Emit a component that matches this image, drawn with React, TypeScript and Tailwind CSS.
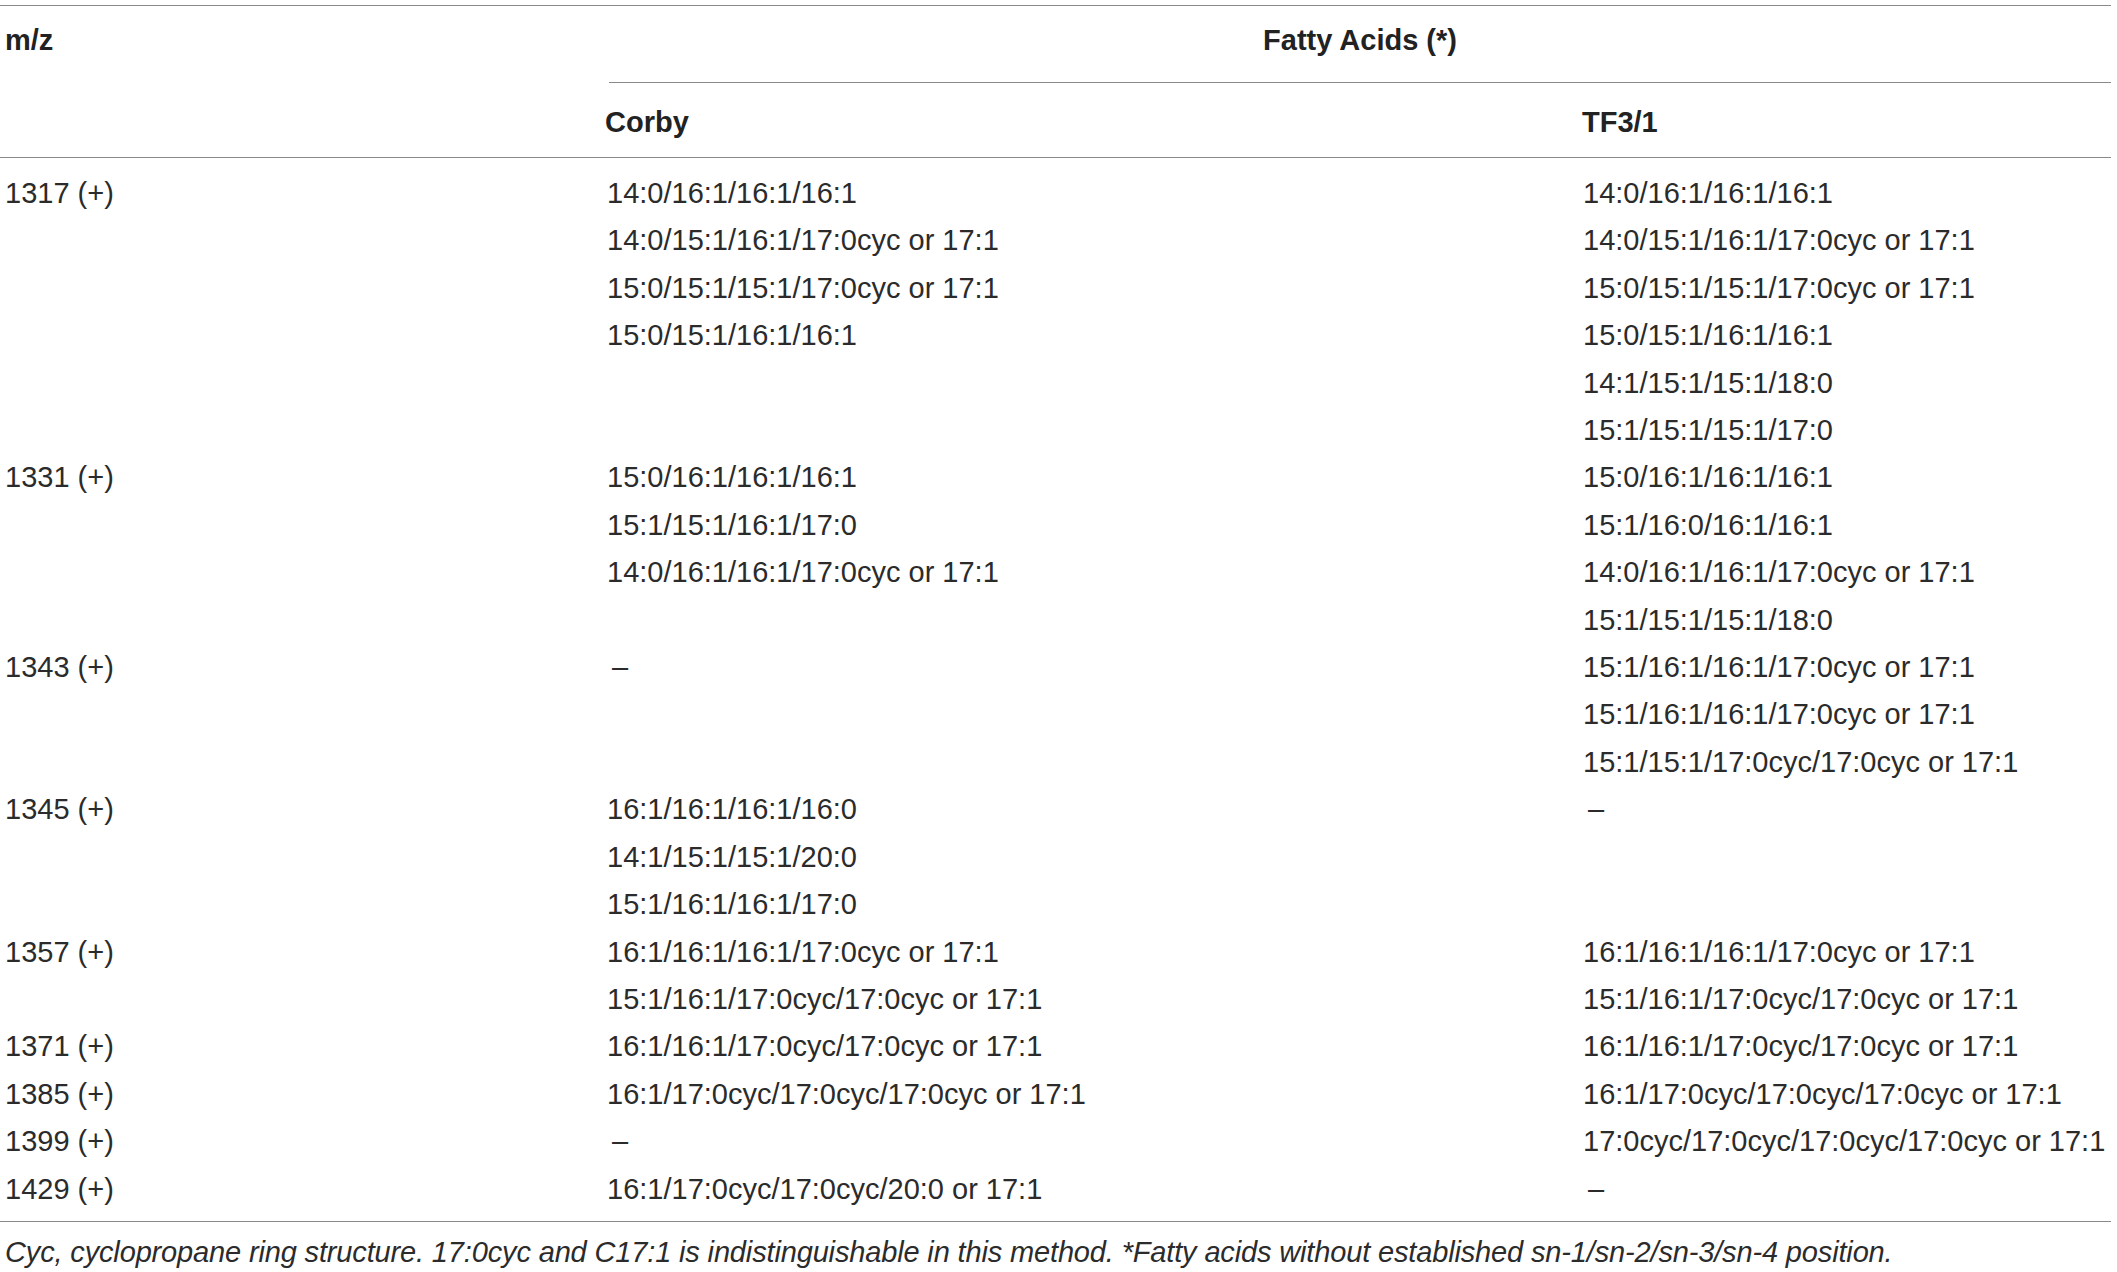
import React from "react";

type Group = { mz: string; corby: string[]; tf: string[] };

const groups: Group[] = [
  {
    mz: "1317 (+)",
    corby: [
      "14:0/16:1/16:1/16:1",
      "14:0/15:1/16:1/17:0cyc or 17:1",
      "15:0/15:1/15:1/17:0cyc or 17:1",
      "15:0/15:1/16:1/16:1",
    ],
    tf: [
      "14:0/16:1/16:1/16:1",
      "14:0/15:1/16:1/17:0cyc or 17:1",
      "15:0/15:1/15:1/17:0cyc or 17:1",
      "15:0/15:1/16:1/16:1",
      "14:1/15:1/15:1/18:0",
      "15:1/15:1/15:1/17:0",
    ],
  },
  {
    mz: "1331 (+)",
    corby: ["15:0/16:1/16:1/16:1", "15:1/15:1/16:1/17:0", "14:0/16:1/16:1/17:0cyc or 17:1"],
    tf: [
      "15:0/16:1/16:1/16:1",
      "15:1/16:0/16:1/16:1",
      "14:0/16:1/16:1/17:0cyc or 17:1",
      "15:1/15:1/15:1/18:0",
    ],
  },
  {
    mz: "1343 (+)",
    corby: ["–"],
    tf: [
      "15:1/16:1/16:1/17:0cyc or 17:1",
      "15:1/16:1/16:1/17:0cyc or 17:1",
      "15:1/15:1/17:0cyc/17:0cyc or 17:1",
    ],
  },
  {
    mz: "1345 (+)",
    corby: ["16:1/16:1/16:1/16:0", "14:1/15:1/15:1/20:0", "15:1/16:1/16:1/17:0"],
    tf: ["–"],
  },
  {
    mz: "1357 (+)",
    corby: ["16:1/16:1/16:1/17:0cyc or 17:1", "15:1/16:1/17:0cyc/17:0cyc or 17:1"],
    tf: ["16:1/16:1/16:1/17:0cyc or 17:1", "15:1/16:1/17:0cyc/17:0cyc or 17:1"],
  },
  {
    mz: "1371 (+)",
    corby: ["16:1/16:1/17:0cyc/17:0cyc or 17:1"],
    tf: ["16:1/16:1/17:0cyc/17:0cyc or 17:1"],
  },
  {
    mz: "1385 (+)",
    corby: ["16:1/17:0cyc/17:0cyc/17:0cyc or 17:1"],
    tf: ["16:1/17:0cyc/17:0cyc/17:0cyc or 17:1"],
  },
  {
    mz: "1399 (+)",
    corby: ["–"],
    tf: ["17:0cyc/17:0cyc/17:0cyc/17:0cyc or 17:1"],
  },
  {
    mz: "1429 (+)",
    corby: ["16:1/17:0cyc/17:0cyc/20:0 or 17:1"],
    tf: ["–"],
  },
];

export default function App() {
  return (
    <div
      className="bg-white w-[2117px] h-[1272px] overflow-hidden text-[#2b2b2b] text-[29px]"
      style={{ fontFamily: '"Liberation Sans", Arial, sans-serif' }}
    >
      <div className="w-[2111px] pt-[5px]">
        {/* header */}
        <div className="border-t border-[#8a8a8a] border-b grid grid-cols-[602px_1fr]">
          <div className="pl-[5px] pt-[11px] font-bold leading-[47px] text-[#222]">m/z</div>
          <div className="flex flex-col">
            <div className="h-[77px] pt-[11px] border-b border-[#8a8a8a] text-center font-bold leading-[47px] text-[#222] ml-[7px]">
              Fatty Acids (*)
            </div>
            <div className="grid grid-cols-[976px_1fr] h-[74px] pt-[16px] leading-[47px] font-bold text-[#222]">
              <div className="pl-[3px]">Corby</div>
              <div className="pl-[4px]">TF3/1</div>
            </div>
          </div>
        </div>
        {/* body */}
        <div className="pt-[12px] pb-[8px] border-b border-[#8a8a8a] leading-[47.4px]">
          {groups.map((g) => (
            <div key={g.mz} className="grid grid-cols-[602px_978px_1fr]">
              <div className="pl-[5px]">{g.mz}</div>
              <div className="pl-[5px] flex flex-col">
                {g.corby.map((l, i) => (
                  <div key={i} className={l === "–" ? "pl-[5px]" : ""}>
                    {l}
                  </div>
                ))}
              </div>
              <div className="pl-[3px] flex flex-col">
                {g.tf.map((l, i) => (
                  <div key={i} className={l === "–" ? "pl-[5px]" : ""}>
                    {l}
                  </div>
                ))}
              </div>
            </div>
          ))}
        </div>
        <div className="pl-[5px] italic leading-[47px] pt-[7px] whitespace-nowrap tracking-[-0.15px]">
          Cyc, cyclopropane ring structure. 17:0cyc and C17:1 is indistinguishable in this method. *Fatty acids without established sn-1/sn-2/sn-3/sn-4 position.
        </div>
      </div>
    </div>
  );
}
